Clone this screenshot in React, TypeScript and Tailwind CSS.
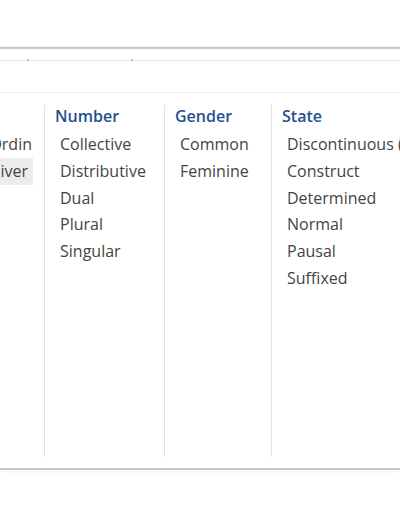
const columns = [
  { title: 'Number', width: 'w-[120px]', items: ['Collective', 'Distributive', 'Dual', 'Plural', 'Singular'] },
  { title: 'Gender', width: 'w-[107px]', items: ['Common', 'Feminine'] },
  { title: 'State', width: 'w-[160px]', items: ['Discontinuous (', 'Construct', 'Determined', 'Normal', 'Pausal', 'Suffixed'] },
];

export default function App() {
  return (
    <div className="w-[400px] h-[516px] bg-white overflow-hidden font-['Open_Sans',sans-serif]">
      <div className="h-[47px] border-b border-[#f1f1f1]" />
      <div className="border-t-2 border-[#c9c9c9]">
        {/* toolbar strip */}
        <div className="relative h-[12px] border-b border-[#e4e4e4]">
          <span className="absolute left-[27px] bottom-[-1px] w-[2px] h-[2px] bg-[#bdbdbd]" />
          <span className="absolute left-[131px] bottom-[-1px] w-[2px] h-[2px] bg-[#bdbdbd]" />
        </div>
        <div className="h-[32px] border-b border-[#ececec]" />

        <div className="flex overflow-hidden pt-[12px] pb-[11px]">
          {/* partially scrolled first column */}
          <div className="w-[45px] h-[352px] shrink-0 border-r border-[#e3e3e3] flex flex-col overflow-hidden">
            <div className="h-[26px]" />
            <div className="flex flex-col text-[16px] leading-[26.8px] text-[#444]">
              <div className="pr-[12px] flex justify-end whitespace-nowrap">Ordin</div>
              <div className="w-[33px] bg-[#ececec] pr-[5px] flex justify-end whitespace-nowrap">iver</div>
            </div>
          </div>

          {columns.map((col, i) => (
            <div
              key={col.title}
              className={`${col.width} h-[352px] shrink-0 ${i < columns.length - 1 ? 'border-r border-[#e3e3e3]' : ''}`}
            >
              <div className="-mt-[1px] pl-[10px] text-[16px] leading-[24px] font-semibold text-[#1f5290]">
                {col.title}
              </div>
              <ul className="mt-[3px] pl-[15px] text-[16px] leading-[26.8px] text-[#444]">
                {col.items.map((item) => (
                  <li key={item} className="whitespace-nowrap">{item}</li>
                ))}
              </ul>
            </div>
          ))}
        </div>
        <div className="border-b-2 border-[#c9c9c9] shadow-[0_2px_3px_rgba(0,0,0,0.06)]" />
      </div>
    </div>
  );
}
